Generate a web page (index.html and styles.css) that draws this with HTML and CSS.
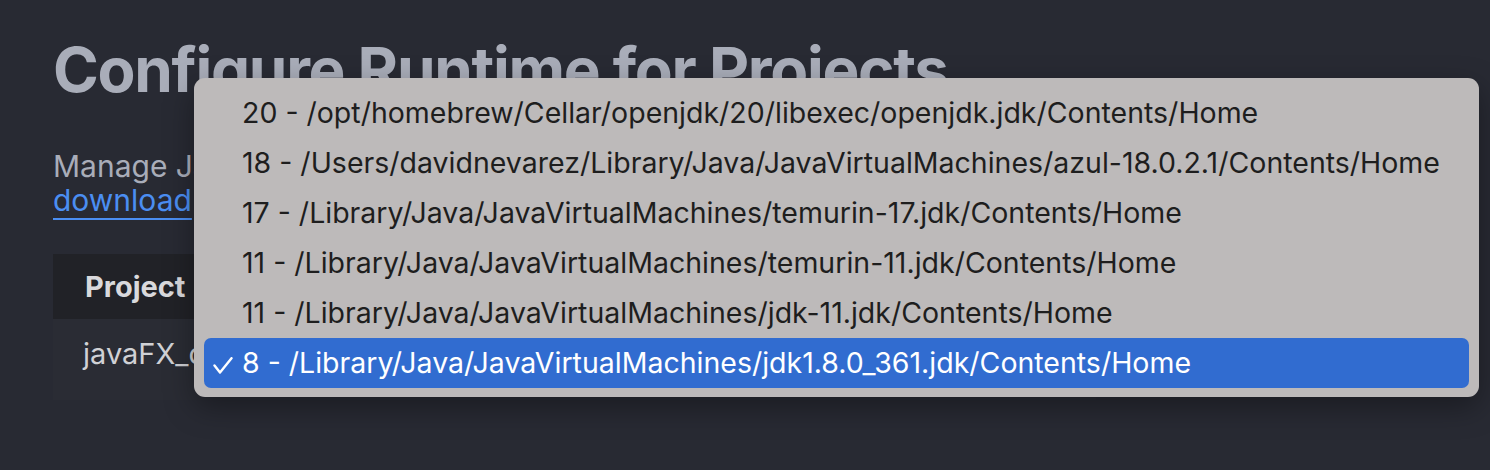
FILE: index.html
```html
<!DOCTYPE html>
<html>
<head>
<meta charset="utf-8">
<link rel="stylesheet" href="styles.css">
</head>
<body>
<main class="page">
  <h1 class="title">Configure Runtime for Projects</h1>
  <p class="intro">Manage Java runtime for your projects. Choose a JDK from the list below or<br><a class="link" href="#">download</a> a new one.</p>
  <table class="projects">
    <thead>
      <tr><th>Project</th><th>JDK Runtime</th></tr>
    </thead>
    <tbody>
      <tr><td>javaFX_demo</td><td>8 - /Library/Java/JavaVirtualMachines/jdk1.8.0_361.jdk</td></tr>
    </tbody>
  </table>
</main>
<ul class="menu">
  <li class="menu-item">20 - /opt/homebrew/Cellar/openjdk/20/libexec/openjdk.jdk/Contents/Home</li>
  <li class="menu-item">18 - /Users/davidnevarez/Library/Java/JavaVirtualMachines/azul-18.0.2.1/Contents/Home</li>
  <li class="menu-item">17 - /Library/Java/JavaVirtualMachines/temurin-17.jdk/Contents/Home</li>
  <li class="menu-item">11 - /Library/Java/JavaVirtualMachines/temurin-11.jdk/Contents/Home</li>
  <li class="menu-item">11 - /Library/Java/JavaVirtualMachines/jdk-11.jdk/Contents/Home</li>
  <li class="menu-item selected"><svg class="check" width="20" height="17" viewBox="0 0 20 17"><path d="M1.5 8.5 L7 15.5 L18.5 1.2" fill="none" stroke="#ffffff" stroke-width="2.4" stroke-linecap="round" stroke-linejoin="round"/></svg>8 - /Library/Java/JavaVirtualMachines/jdk1.8.0_361.jdk/Contents/Home</li>
</ul>
</body>
</html>
```
FILE: styles.css
```css
html, body {
  margin: 0;
  padding: 0;
  background: #282a33;
  font-family: Inter, "Liberation Sans", sans-serif;
  overflow: hidden;
}
.page {
  padding: 32px 53px 0;
}
.title {
  margin: 0;
  font-size: 62px;
  font-weight: 700;
  line-height: 76px;
  color: #a9adb9;
  letter-spacing: -1.3px;
  white-space: nowrap;
}
.intro {
  margin: 41px 0 0;
  font-size: 30px;
  line-height: 34px;
  color: #a9adb9;
  white-space: nowrap;
}
.link {
  color: #4b8ef2;
  text-decoration: underline;
  text-underline-offset: 7px;
  text-decoration-thickness: 2px;
}
.projects {
  margin-top: 37px;
  border-collapse: collapse;
  font-size: 29px;
}
.projects th {
  background: #212227;
  color: #d9d9dc;
  font-weight: 700;
  text-align: left;
  height: 65px;
  padding: 0 32px;
  white-space: nowrap;
}
.projects td {
  background: #2a2c34;
  color: #d0d1d5;
  line-height: 35px;
  vertical-align: top;
  padding: 17px 30px 29px;
  white-space: nowrap;
}
.menu {
  position: absolute;
  left: 194px;
  top: 78px;
  width: 1265px;
  margin: 0;
  padding: 10px 10px 9px;
  list-style: none;
  background: #bdbaba;
  border-radius: 11px;
  box-shadow: 0 10px 30px rgba(0,0,0,0.35);
}
.menu-item {
  position: relative;
  height: 50px;
  line-height: 50px;
  padding-left: 38px;
  font-size: 28.5px;
  color: #1e1e1e;
  border-radius: 7px;
  white-space: nowrap;
}
.menu-item.selected {
  background: #316cd0;
  color: #ffffff;
}
.check {
  position: absolute;
  left: 9px;
  top: 19px;
}
```
